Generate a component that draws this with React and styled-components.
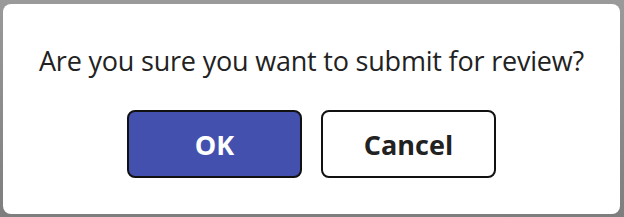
import React from "react";
import styled, { createGlobalStyle } from "styled-components";

const GlobalStyle = createGlobalStyle`
  html, body {
    margin: 0;
    padding: 0;
    background: #8c8c8c;
  }
  body {
    font-family: "Open Sans", "Noto Sans", sans-serif;
  }
`;

const Backdrop = styled.div`
  width: 624px;
  height: 217px;
  box-sizing: border-box;
  padding: 4px 4px 3px 3px;
  background: linear-gradient(#9a9a9a, #7e7e7e);
`;

const Dialog = styled.div`
  height: 100%;
  box-sizing: border-box;
  background: #ffffff;
  border-radius: 8px;
  display: flex;
  flex-direction: column;
  align-items: center;
  padding-top: 40px;
`;

const Message = styled.p`
  margin: 0;
  font-size: 27px;
  line-height: 34px;
  color: #222222;
  letter-spacing: -0.2px;
`;

const Actions = styled.div`
  display: flex;
  gap: 19px;
  margin-top: 32px;
`;

const Button = styled.button`
  width: 175px;
  height: 68px;
  box-sizing: border-box;
  border: 2px solid #111111;
  border-radius: 8px;
  font-family: "Open Sans", "Noto Sans", sans-serif;
  font-size: 27px;
  font-weight: 700;
  cursor: pointer;
  background: ${(p) => (p.$primary ? "#4350ae" : "#ffffff")};
  color: ${(p) => (p.$primary ? "#ffffff" : "#222222")};
`;

export default function App() {
  return (
    <>
      <GlobalStyle />
      <Backdrop>
        <Dialog>
          <Message>Are you sure you want to submit for review?</Message>
          <Actions>
            <Button $primary>OK</Button>
            <Button>Cancel</Button>
          </Actions>
        </Dialog>
      </Backdrop>
    </>
  );
}
